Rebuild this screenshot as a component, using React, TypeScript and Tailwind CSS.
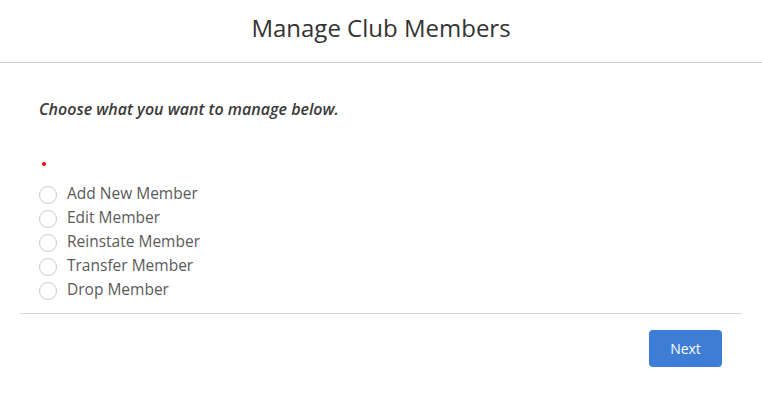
import React from "react";

const options = ["Add New Member", "Edit Member", "Reinstate Member", "Transfer Member", "Drop Member"];

export default function App() {
  return (
    <div className="w-[762px] h-[400px] bg-white" style={{ fontFamily: '"Open Sans", "Noto Sans", sans-serif' }}>
      <div className="pt-[12px] pb-[18px] border-b border-[#cfcfcf] text-center">
        <h1 className="text-[24px] leading-[32px] text-[#333333] font-normal">Manage Club Members</h1>
      </div>
      <div className="px-[39px] pt-[36px]">
        <p className="text-[16px] leading-[20px] italic font-semibold text-[#3a3a3a]">Choose what you want to manage below.</p>
        <div className="mt-[43px] ml-[3px] w-[4px] h-[4px] rounded-full bg-[#ff0000]" />
        <div className="mt-[17px] flex flex-col">
          {options.map((o) => (
            <label key={o} className="h-[24px] flex items-center gap-[10px]">
              <span className="w-[18px] h-[18px] rounded-full border border-[#cbcbcb] bg-white shrink-0" />
              <span className="text-[15.5px] leading-[24px] mb-[4px] text-[#5a5a5a]">{o}</span>
            </label>
          ))}
        </div>
      </div>
      <div className="mx-[20px] mt-[10px] border-t border-[#d6d6d6] pt-[16px] pr-[20px] flex justify-end">
        <button className="w-[73px] h-[37px] rounded-[4px] bg-[#3d7dd6] text-white text-[14px] leading-[20px]">Next</button>
      </div>
    </div>
  );
}
